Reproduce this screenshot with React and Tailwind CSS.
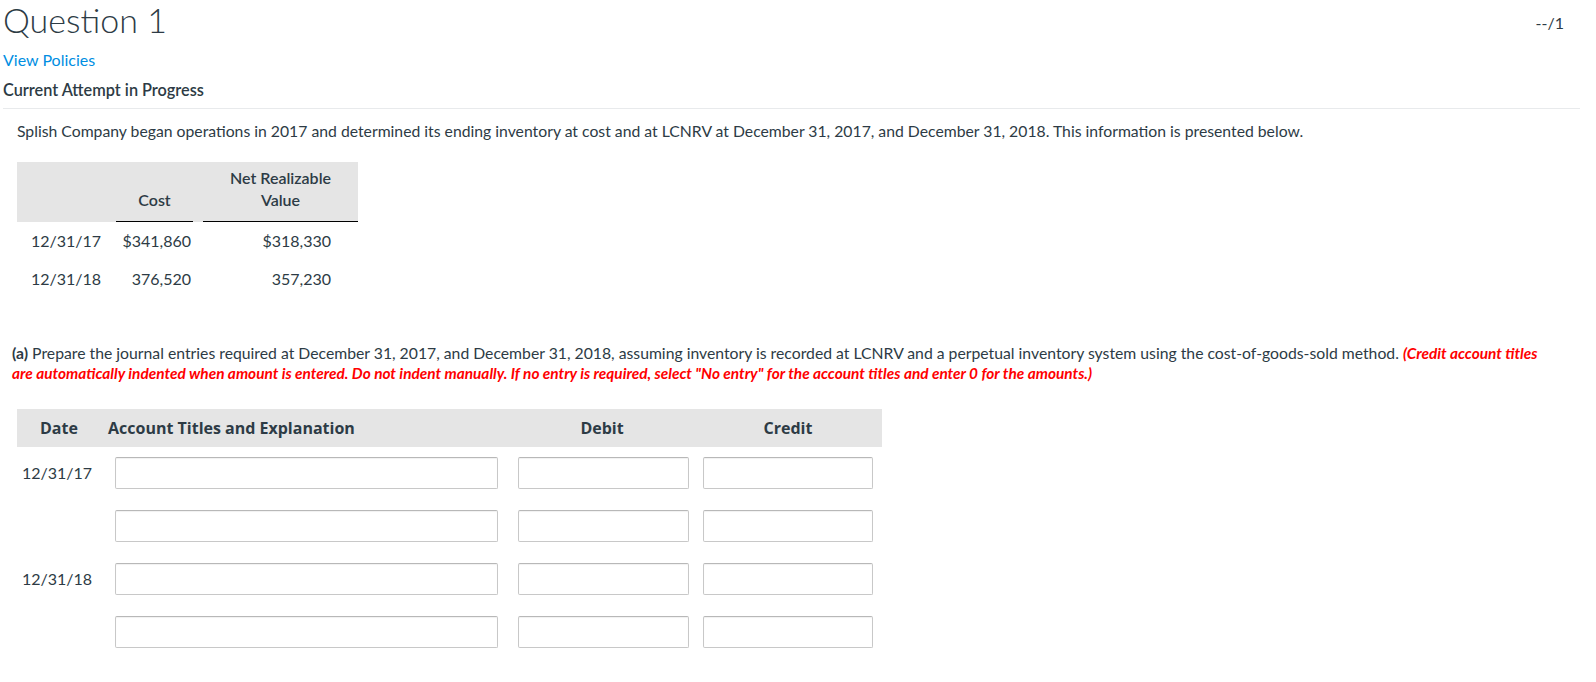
export default function App() {
  const rows = ['12/31/17', '', '12/31/18', ''];
  const inputCls =
    'h-[32px] rounded-[2px] border border-[#c8c8c8] border-t-[#b8b8b8] bg-white shadow-[inset_0_1px_1px_rgba(0,0,0,0.06)] outline-none';

  return (
    <div className="min-h-[682px] w-full bg-white text-[#2d3b45]" style={{ fontFamily: 'Lato, "Open Sans", sans-serif' }}>
      <div className="flex items-start justify-between pl-[3px] pr-[32px]">
        <h1 className="text-[34px] font-light leading-[1.2]">Question 1</h1>
        <span className="mt-[13px] text-[16px] leading-[20px]">--/1</span>
      </div>

      <div className="pl-[3px]">
        <a href="#" className="mt-[9px] block text-[16px] leading-[20px] text-[#008ee2]">View Policies</a>
        <p className="mt-[10px] text-[16.3px] font-semibold leading-[20px]">Current Attempt in Progress</p>
      </div>

      <div className="ml-[3px] mr-[16px] mt-[8px] border-t border-[#e8eaec]" />

      <p className="mt-[12px] pl-[17px] text-[15.75px] leading-[20px]">
        Splish Company began operations in 2017 and determined its ending inventory at cost and at LCNRV at December 31, 2017, and December 31, 2018. This information is presented below.
      </p>

      <div className="ml-[17px] mt-[21px] w-[341px] text-[16px]">
        <div className="flex h-[60px] items-end bg-[#e5e5e5] font-semibold">
          <div className="w-[99px]" />
          <div className="w-[77px] border-b border-black pb-[10px] text-center leading-[22px]">Cost</div>
          <div className="w-[10px]" />
          <div className="w-[155px] border-b border-black pb-[10px] text-center leading-[22px]">
            Net Realizable
            <br />
            Value
          </div>
        </div>
        {[
          ['12/31/17', '$341,860', '$318,330'],
          ['12/31/18', '376,520', '357,230'],
        ].map(([d, c, n]) => (
          <div key={d} className="flex h-[38px] items-center">
            <div className="w-[99px] pl-[14px]">{d}</div>
            <div className="w-[77px] pr-[2px] text-right">{c}</div>
            <div className="w-[10px]" />
            <div className="w-[155px] pr-[27px] text-right">{n}</div>
          </div>
        ))}
      </div>

      <p className="mt-[45px] pl-[12px] pr-[50px] text-[15.75px] leading-[20px]">
        <span className="font-bold">(a)</span> Prepare the journal entries required at December 31, 2017, and December 31, 2018, assuming inventory is recorded at LCNRV and a perpetual inventory system using the cost-of-goods-sold method.{' '}
        <span className="text-[15.4px] font-bold italic text-[#ff0000]">
          (Credit account titles are automatically indented when amount is entered. Do not indent manually. If no entry is required, select "No entry" for the account titles and enter 0 for the amounts.)
        </span>
      </p>

      <div className="ml-[17px] mt-[26px] w-[865px] text-[16px]">
        <div
          className="grid h-[38px] grid-cols-[88px_405px_184px_188px] items-center bg-[#e5e5e5] text-[16px] font-bold"
          style={{ fontFamily: '"Open Sans", "DejaVu Sans", sans-serif' }}
        >
          <div className="pl-[23px]">Date</div>
          <div className="pl-[3px]">Account Titles and Explanation</div>
          <div className="text-center">Debit</div>
          <div className="text-center">Credit</div>
        </div>
        {rows.map((date, i) => (
          <div key={i} className="grid h-[53px] grid-cols-[88px_405px_184px_188px] items-start pt-[10px]">
            <div className="pl-[5px] leading-[32px]">{date}</div>
            <div className="pl-[10px]">
              <input type="text" className={`${inputCls} w-[383px]`} />
            </div>
            <div className="pl-[8px]">
              <input type="text" className={`${inputCls} w-[171px]`} />
            </div>
            <div className="pl-[9px]">
              <input type="text" className={`${inputCls} w-[170px]`} />
            </div>
          </div>
        ))}
      </div>
    </div>
  );
}
